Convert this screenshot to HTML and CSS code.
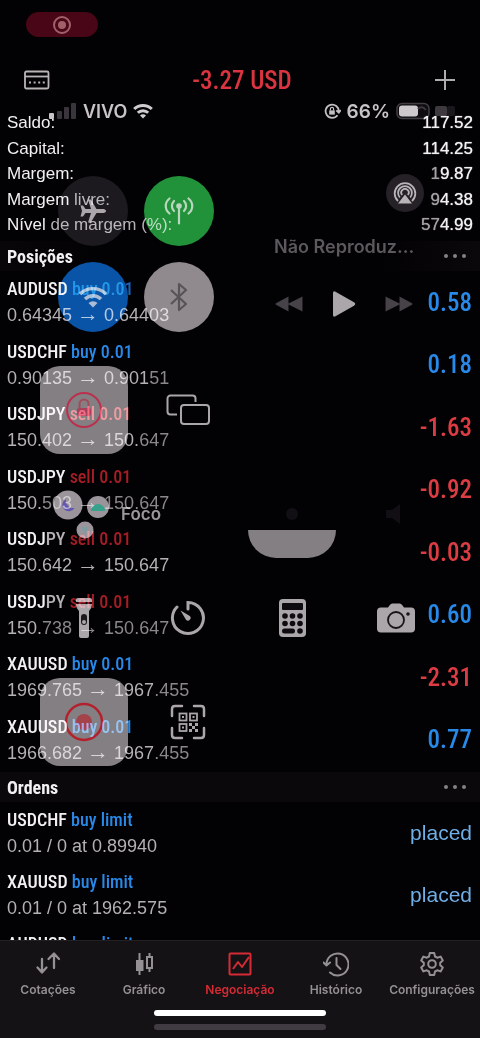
FILE: index.html
```html
<!DOCTYPE html>
<html lang="pt-BR">
<head>
<meta charset="utf-8">
<meta name="viewport" content="width=device-width, initial-scale=1">
<title>Negociação</title>
<link rel="stylesheet" href="styles.css">
</head>
<body>
<div class="app">
  <header class="topbar">
    <div class="recording">
      <svg width="20" height="20" viewBox="0 0 20 20"><circle cx="10" cy="10" r="8" fill="none" stroke="#a0606a" stroke-width="2"/><circle cx="10" cy="10" r="4" fill="#a0606a"/></svg>
    </div>
    <div class="titlebar">
      <button class="icon-button" aria-label="Contas">
        <svg width="26" height="20" viewBox="0 0 26 20" fill="none" stroke="#b9b5b7" stroke-width="1.8"><rect x="1" y="1.5" width="23.500" height="17" rx="1.500"/><path d="M1 6.500h23.500"/><path d="M5 12.500h16" stroke-dasharray="2 2.600" stroke-width="2"/></svg>
      </button>
      <h1 class="profit">-3.27 USD</h1>
      <button class="icon-button" aria-label="Nova ordem">
        <svg width="22" height="22" viewBox="0 0 22 22" stroke="#b0acae" stroke-width="2"><path d="M11 1v20M1 11h20"/></svg>
      </button>
    </div>
  </header>

  <main class="content">
    <dl class="summary">
      <div class="summary-row"><dt>Saldo:</dt><dd>117.52</dd></div>
      <div class="summary-row"><dt>Capital:</dt><dd>114.25</dd></div>
      <div class="summary-row"><dt>Margem:</dt><dd><span class="dim">1</span>9.87</dd></div>
      <div class="summary-row"><dt>Margem <span class="soft">livre:</span></dt><dd><span class="dim">9</span>4.38</dd></div>
      <div class="summary-row"><dt>Nível <span class="soft">de margem (%):</span></dt><dd><span class="dim">57</span>4.99</dd></div>
    </dl>

    <section>
      <div class="section-head section-head-plain"><h2>Posições</h2><button class="more" aria-label="Mais opções de posições"><i></i><i></i><i></i></button></div>
      <ul class="positions">
        <li class="row"><div><h3>AUDUSD <span class="buy deep">buy 0.01</span></h3><p>0.64345 <span class="arrow">→</span> 0.64403</p></div><strong class="value buy">0.58</strong></li>
        <li class="row"><div><h3>USDCHF <span class="buy">buy 0.01</span></h3><p>0.90135 <span class="arrow">→</span> 0.901<span class="fade">51</span></p></div><strong class="value buy">0.18</strong></li>
        <li class="row"><div><h3>USDJPY <span class="sell">sell 0.01</span></h3><p>150.402 <span class="arrow">→</span> 150.<span class="fade">647</span></p></div><strong class="value sell">-1.63</strong></li>
        <li class="row"><div><h3>USDJPY <span class="sell deep">sell 0.01</span></h3><p>150.<span class="fade">503 <span class="arrow">→</span> 150.647</span></p></div><strong class="value sell">-0.92</strong></li>
        <li class="row"><div><h3>USDJ<span class="soft">PY</span> <span class="sell deep">sell 0.01</span></h3><p>150.642 <span class="arrow">→</span> 150.647</p></div><strong class="value sell">-0.03</strong></li>
        <li class="row"><div><h3>USDJ<span class="soft">PY</span> <span class="sell deep">sell 0.01</span></h3><p>150.<span class="fade">738 <span class="arrow">→</span> 150.647</span></p></div><strong class="value buy">0.60</strong></li>
        <li class="row"><div><h3>XAUUSD <span class="buy">buy 0.01</span></h3><p>1969.765 <span class="arrow">→</span> 1967<span class="fade">.455</span></p></div><strong class="value sell">-2.31</strong></li>
        <li class="row"><div><h3>XAUUSD <span class="buy">buy 0.01</span></h3><p>1966.682 <span class="arrow">→</span> 1967<span class="fade">.455</span></p></div><strong class="value buy">0.77</strong></li>
      </ul>
    </section>

    <section>
      <div class="section-head"><h2>Ordens</h2><button class="more" aria-label="Mais opções de ordens"><i></i><i></i><i></i></button></div>
      <ul class="orders">
        <li class="row"><div><h3>USDCHF <span class="buy">buy limit</span></h3><p>0.01 / 0 at 0.89940</p></div><span class="placed">placed</span></li>
        <li class="row"><div><h3>XAUUSD <span class="buy">buy limit</span></h3><p>0.01 / 0 at 1962.575</p></div><span class="placed">placed</span></li>
        <li class="row"><div><h3>AUDUSD <span class="buy">buy limit</span></h3></div></li>
      </ul>
    </section>
  </main>

  <footer class="bottom">
    <nav class="tabs">
      <a class="tab" href="#cotacoes"><svg width="26" height="26" viewBox="0 0 26 26" fill="none" stroke="currentColor" stroke-width="2.300" stroke-linecap="round" stroke-linejoin="round"><path d="M7 8v13M2.500 16.500L7 21.500l4.500-5M19 17V3M13.500 8L19 2.500 24 8"/></svg><span>Cotações</span></a>
      <a class="tab" href="#grafico"><svg width="26" height="26" viewBox="0 0 26 26" fill="none" stroke="currentColor" stroke-width="2"><path d="M8.500 2v22M18.500 2v4M18.500 17v4"/><rect x="6" y="10" width="5.500" height="9" fill="currentColor"/><rect x="16" y="6" width="5" height="11"/></svg><span>Gráfico</span></a>
      <a class="tab tab-active" href="#negociacao" aria-current="page"><svg width="26" height="26" viewBox="0 0 26 26" fill="none" stroke="currentColor" stroke-width="2" stroke-linejoin="round"><rect x="2.500" y="2.500" width="21" height="21" rx="1"/><path d="M6 18l5-7 4 5 7-10"/></svg><span>Negociação</span></a>
      <a class="tab" href="#historico"><svg width="26" height="26" viewBox="0 0 26 26" fill="none" stroke="currentColor" stroke-width="2" stroke-linecap="round" stroke-linejoin="round"><path d="M3.500 13.500A11 11 0 1 1 7 21.500M.5 11.500l3 3 3.500-3"/><path d="M13.500 7v7l4 4"/></svg><span>Histórico</span></a>
      <a class="tab" href="#configuracoes"><svg width="26" height="26" viewBox="0 0 26 26" fill="none" stroke="currentColor" stroke-width="2" stroke-linejoin="round"><path d="M10.800 2h4.400l.8 3.500 2.200 1.200 3.400-1.100 2.200 3.800-2.600 2.400v2.400l2.600 2.400-2.200 3.800-3.400-1.100-2.200 1.200-.8 3.500h-4.400l-.8-3.500-2.200-1.200-3.400 1.100-2.200-3.800 2.600-2.400v-2.400L2.200 9.400l2.200-3.800 3.400 1.100L10 5.500z"/><circle cx="13" cy="13" r="3.800"/></svg><span>Configurações</span></a>
    </nav>
    <div class="home-bar"></div>
    <div class="home-bar home-bar-dim"></div>
  </footer>

  <div class="control-center">
    <div class="status">
      <div class="status-side">
        <svg width="28" height="18" viewBox="0 0 28 18" fill="#38343a"><rect x="0" y="11" width="5" height="6" rx="1" fill="#c7c3c6"/><rect x="8" y="9" width="5" height="8" rx="1"/><rect x="15" y="5" width="5" height="12" rx="1"/><rect x="22" y="1" width="5" height="16" rx="1"/></svg>
        <span class="carrier">VIVO</span>
        <svg width="20" height="16" viewBox="0 0 20 16" fill="none" stroke="#cfcccf" stroke-width="3"><path d="M1.200 6a12.500 12.500 0 0 1 17.600 0M4.800 9.800a7.400 7.400 0 0 1 10.400 0"/><path d="M7 12.400a4.200 4.200 0 0 1 6 0L10 15.600z" fill="#cfcccf" stroke="none"/></svg>
      </div>
      <div class="status-side status-right">
        <svg width="17" height="17" viewBox="0 0 17 17" fill="none" stroke="#c4c0c3" stroke-width="1.800"><path d="M13.500 12.200A6.600 6.600 0 1 1 14.800 8.500M12.300 7.300l2.500 2.400 2-2.700"/><rect x="5.200" y="7.400" width="5.600" height="4.200" fill="#c4c0c3" stroke="none"/><path d="M6.400 7.500V6a1.600 1.600 0 0 1 3.200 0v1.500" stroke-width="1.200"/></svg>
        <span class="charge">66%</span>
        <svg width="64" height="18" viewBox="0 0 64 18"><rect x="1" y="1.500" width="32" height="15" rx="5" fill="#0d0b0e" stroke="#403c41" stroke-width="1.500"/><rect x="3" y="3.500" width="19" height="11" rx="3" fill="#cdc9cc"/><path d="M22 7q4-4 8 1" stroke="#39353a" stroke-width="2" fill="none"/><rect x="39" y="4" width="12" height="10" rx="2" fill="#3c383d"/><rect x="51" y="4" width="8" height="10" rx="2" fill="#19171a"/></svg>
      </div>
    </div>

    <div class="modules">
      <div class="connectivity">
        <button class="toggle toggle-off" aria-label="Modo avião"><svg width="28" height="28" viewBox="0 0 28 28" fill="#aaa6a9"><path d="M27 14c0 1.400-1.800 2-3.500 2h-6l-5.700 9.500H9L12 16H6.500L4 19.500H1.500L3 14 1.500 8.500H4L6.500 12H12L9 2.500h2.800L17.500 12h6c1.700 0 3.500.6 3.500 2z"/></svg></button>
        <button class="toggle toggle-green" aria-label="Dados celulares"><svg width="32" height="30" viewBox="0 0 32 30" fill="none" stroke="#b9d6bd" stroke-width="2.200" stroke-linecap="round"><circle cx="16" cy="10" r="2.800" fill="#b9d6bd" stroke="none"/><path d="M16 11v16.500M11 15a7 7 0 0 1 0-10M21 15a7 7 0 0 0 0-10M6.500 17.500c-5-4-5-11 0-15M25.500 17.500c5-4 5-11 0-15"/></svg></button>
        <button class="toggle toggle-blue" aria-label="Wi-Fi"><svg width="30" height="24" viewBox="0 0 30 24" fill="none" stroke="#a9bdd4" stroke-width="3.400"><path d="M2 9a18.400 18.400 0 0 1 26 0M7 14a11.300 11.300 0 0 1 16 0"/><path d="M10.500 18a6.400 6.400 0 0 1 9 0L15 22.500z" fill="#a9bdd4" stroke="none"/></svg></button>
        <button class="toggle toggle-grey" aria-label="Bluetooth"><svg width="20" height="30" viewBox="0 0 20 30" fill="none" stroke="#565254" stroke-width="2.200" stroke-linejoin="round"><path d="M2 8l15 14-7 6V2l7 6L2 22"/></svg></button>
      </div>

      <div class="media">
        <button class="airplay" aria-label="AirPlay"><svg width="26" height="26" viewBox="0 0 26 26" fill="none" stroke="#b8b4b7" stroke-width="1.800"><path d="M6 21A10.300 10.300 0 1 1 20 21M7.800 17.500a6.900 6.900 0 1 1 10.400 0M10.200 15a3.700 3.700 0 1 1 5.600 0"/><path d="M13 14.500l7 9H6z" fill="#b8b4b7" stroke="none"/></svg></button>
        <p class="media-title">Não Reproduz...</p>
        <div class="media-controls">
          <button aria-label="Anterior"><svg width="30" height="20" viewBox="0 0 30 20" fill="#454145"><path d="M14.500 2.500v15L2 10.800a1 1 0 0 1 0-1.600zM28.500 2.500v15L15 10.800a1 1 0 0 1 0-1.600z"/></svg></button>
          <button aria-label="Reproduzir"><svg width="26" height="28" viewBox="0 0 26 28" fill="#aaa6a9"><path d="M2 3Q2 .5 4.500 1.700L23 12.300q2.500 1.700 0 3.400L4.500 26.300Q2 27.500 2 25z"/></svg></button>
          <button aria-label="Próxima"><svg width="30" height="20" viewBox="0 0 30 20" fill="#454145"><path d="M1.500 2.500v15L15 10.800a1 1 0 0 0 0-1.600zM15.500 2.500v15L28 10.800a1 1 0 0 0 0-1.600z"/></svg></button>
        </div>
      </div>

      <button class="tile" aria-label="Bloqueio de rotação"><svg width="40" height="40" viewBox="0 0 40 40" fill="none" stroke="#b9304c" stroke-width="2"><circle cx="20" cy="20" r="17"/><path d="M15.500 18v-4a4.500 4.500 0 0 1 9 0v4" stroke="#a34a59"/><rect x="13" y="18" width="14" height="8" rx="2" fill="#a8405a" stroke="none"/></svg></button>
      <button class="plain" aria-label="Espelhar tela"><svg width="46" height="32" viewBox="0 0 46 32" fill="none" stroke="#aaa6a9" stroke-width="2"><path d="M12 20.500H5.500a3 3 0 0 1-3-3v-13a3 3 0 0 1 3-3h22a3 3 0 0 1 3 3V8"/><rect x="16" y="11" width="28" height="19" rx="3"/></svg></button>

      <button class="focus"><svg width="58" height="50" viewBox="0 0 58 50"><g fill="#9a959a"><circle cx="15" cy="16" r="14.500"/><circle cx="45" cy="18" r="11"/><circle cx="32" cy="41" r="8.500"/></g><path d="M13 10a6.500 6.500 0 1 0 8.500 9A7.500 7.500 0 0 1 13 10z" fill="#6255ad"/><path d="M38 22a7 7 0 0 1 14 0z" fill="#35a18b"/><path d="M29 38h6v2l-3 5-3-5z" fill="#7d9da2"/></svg><span>Foco</span></button>
      <div class="brightness"><svg width="16" height="16" viewBox="0 0 16 16" fill="#100e11"><circle cx="8" cy="8" r="6"/></svg><div class="level"></div></div>
      <div class="plain"><svg width="24" height="24" viewBox="0 0 24 24" fill="#100e11"><path d="M2 8h6l8-6v20l-8-6H2z"/></svg></div>

      <button class="plain" aria-label="Lanterna"><svg width="20" height="42" viewBox="0 0 20 42" fill="#aaa6a9"><path d="M2 3q0-2 2-2h12q2 0 2 2v2H2zM2 7h16q0 4-3 7v25q0 2-2 2H7q-2 0-2-2V14q-3-3-3-7z"/><rect x="7" y="17" width="6" height="11" rx="3" fill="#1a181a"/><circle cx="10" cy="25" r="2" fill="#aaa6a9"/></svg></button>
      <button class="plain" aria-label="Timer"><svg width="36" height="36" viewBox="0 0 36 36" fill="none" stroke="#aaa6a9" stroke-width="3" stroke-linecap="round"><path d="M18 9V2.500A15.500 15.500 0 1 1 7 7"/><path d="M10.500 10.500l9.300 5.500a2.500 2.500 0 0 1-3.800 3.800z" fill="#aaa6a9" stroke="none"/></svg></button>
      <button class="plain" aria-label="Calculadora"><svg width="28" height="38" viewBox="0 0 28 38" fill="#0c0a0d"><rect x="1" y="0" width="27" height="38" rx="4" fill="#aaa6a9"/><rect x="4" y="4" width="21" height="7" rx="1"/><circle cx="7" cy="17" r="2.800"/><circle cx="14.500" cy="17" r="2.800"/><circle cx="22" cy="17" r="2.800"/><circle cx="7" cy="24.500" r="2.800"/><circle cx="14.500" cy="24.500" r="2.800"/><circle cx="22" cy="24.500" r="2.800"/><rect x="4" y="29.500" width="13" height="5" rx="2.500"/><circle cx="22" cy="32" r="2.800"/></svg></button>
      <button class="plain" aria-label="Câmera"><svg width="38" height="30" viewBox="0 0 38 30"><path d="M4 4.500h7q2.500-4 4.500-4h7q2 0 4.500 4h7q4 0 4 4v17q0 4-4 4H4q-4 0-4-4v-17q0-4 4-4z" fill="#aaa6a9"/><circle cx="19" cy="17" r="8" fill="none" stroke="#151316" stroke-width="1.800"/><circle cx="31" cy="11" r="1.800" fill="#151316"/></svg></button>

      <button class="tile" aria-label="Gravação de tela"><svg width="40" height="40" viewBox="0 0 40 40"><circle cx="20" cy="20" r="18" fill="none" stroke="#b3202c" stroke-width="2.500"/><circle cx="20" cy="20" r="8" fill="#a34248"/></svg></button>
      <button class="plain" aria-label="Ler código"><svg width="36" height="36" viewBox="0 0 36 36" fill="none" stroke="#aaa6a9" stroke-width="2.500"><path d="M2 12V5q0-3 3-3h7M24 2h7q3 0 3 3v7M34 24v7q0 3-3 3h-7M12 34H5q-3 0-3-3v-7" stroke-linecap="round"/><g stroke-width="1.800"><rect x="9.500" y="9.500" width="7" height="7"/><rect x="20" y="9.500" width="7" height="7"/><rect x="9.500" y="20" width="7" height="7"/></g><g fill="#aaa6a9" stroke="none"><rect x="12" y="12" width="2" height="2"/><rect x="22.500" y="12" width="2" height="2"/><rect x="12" y="22.500" width="2" height="2"/><rect x="19" y="19" width="3" height="3"/><rect x="25" y="19" width="3" height="3"/><rect x="22" y="22" width="3" height="3"/><rect x="19" y="25" width="3" height="3"/><rect x="25" y="25" width="3" height="3"/></g></svg></button>
    </div>
  </div>
</div>
</body>
</html>
```
FILE: styles.css
```css
* { box-sizing: border-box; margin: 0; padding: 0; }

body {
  background: #000;
  color: #f2f0f2;
  font-family: "Liberation Sans", Arial, sans-serif;
}

button {
  display: grid;
  place-items: center;
  border: 0;
  background: none;
  color: inherit;
  font: inherit;
}

svg { display: block; }
ul { list-style: none; }

.app {
  position: relative;
  display: flex;
  flex-direction: column;
  height: 100vh;
  overflow: hidden;
  background: #020103;
}

/* Top bar */
.topbar { padding: 12px 24px 0; }

.recording {
  display: grid;
  place-items: center;
  width: 72px;
  height: 25px;
  margin-left: 2px;
  border-radius: 13px;
  background: #480616;
}

.titlebar {
  display: flex;
  align-items: center;
  justify-content: space-between;
  height: 44px;
  margin-top: 21px;
}

.profit {
  color: #d93440;
  font-family: "Roboto Condensed", "Liberation Sans Narrow", "Open Sans Condensed", sans-serif;
  font-size: 25px;
  font-weight: 500;
}

/* Account summary */
.content {
  flex: 1;
  min-height: 0;
  overflow: hidden;
  padding-top: 9px;
}

.summary {
  display: flex;
  flex-direction: column;
  justify-content: space-between;
  height: 126px;
  padding: 0 7px;
}

.summary-row {
  display: flex;
  justify-content: space-between;
  font-size: 17px;
  line-height: 24px;
}

.summary dd { text-shadow: 0 0 1px currentColor; }
.dim { color: #a5a1a4; }
.soft { color: #b4b0b3; }
.fade { color: #8b878a; }

/* Lists */
.section-head {
  display: flex;
  align-items: center;
  justify-content: space-between;
  height: 30px;
  margin-top: 1px;
  padding: 0 14px 0 7px;
  background: #0b080c;
}

.section-head-plain { margin-top: 4px; background: linear-gradient(90deg, #080609, #020103 20%, #020103 80%, #0b080c); }

.section-head h2 {
  font-family: "Roboto Condensed", "Liberation Sans Narrow", sans-serif;
  font-size: 18px;
  font-weight: 700;
}

.row h3 {
  font-family: "Roboto Condensed", "Liberation Sans Narrow", sans-serif;
  font-size: 18px;
  font-weight: 500;
  line-height: 26px;
}

.more { display: flex; gap: 5px; }
.more i { width: 4px; height: 4px; border-radius: 50%; background: #858185; }

.positions {
  display: flex;
  flex-direction: column;
  height: 500px;
}

.row {
  display: flex;
  flex: 1;
  align-items: center;
  justify-content: space-between;
  padding: 0 8px 0 7px;
}

.orders .row { padding-top: 5px; padding-bottom: 5px; }

.row p { color: #b4b0b3; font-size: 18px; line-height: 26px; }
.arrow { font-size: 22px; line-height: 18px; }
.row .buy { color: #2889e8; }
.row .sell { color: #dc3c43; }
.row .buy.deep { color: #1b64be; }
.row .sell.deep { color: #a51d26; }

.row .value {
  font-family: "Roboto Condensed", "Liberation Sans Narrow", "Open Sans Condensed", sans-serif;
  font-size: 25px;
  font-weight: 500;
}

.placed { color: #70aee6; font-size: 21px; }

/* Tab bar */
.bottom {
  height: 98px;
  border-top: 1px solid #232024;
  background: #151216;
}

.tabs {
  display: grid;
  grid-template-columns: repeat(5, 1fr);
  padding-top: 10px;
}

.tab {
  display: flex;
  flex-direction: column;
  align-items: center;
  gap: 5px;
  color: #949094;
  font-family: Inter, sans-serif;
  font-size: 12px;
  font-weight: 600;
  line-height: 16px;
  text-decoration: none;
}

.tab-active { color: #d52b34; }

.home-bar {
  width: 36%;
  height: 6px;
  margin: 12px auto 0;
  border-radius: 3px;
  background: #fff;
}

.home-bar-dim { margin-top: 8px; background: #403c41; }

/* Translucent control center, blended over the trading screen */
.control-center {
  position: absolute;
  inset: 0;
  padding-top: 100px;
  mix-blend-mode: screen;
}

.status {
  display: flex;
  align-items: center;
  justify-content: space-between;
  height: 22px;
  padding: 0 20px 0 49px;
  color: #c7c3c6;
  font-family: Inter, sans-serif;
  font-size: 19px;
  font-weight: 600;
}

.status-side { display: flex; align-items: center; gap: 6px; }
.carrier { font-size: 18px; }

.modules {
  display: grid;
  grid-template-columns: repeat(4, 1fr);
  grid-auto-rows: 104px;
  margin-top: 28px;
  padding: 0 32px;
}

.connectivity {
  display: grid;
  grid-area: span 2 / span 2;
  grid-template-columns: 70px 70px;
  place-content: center;
  gap: 16px;
}

.toggle { width: 70px; height: 70px; border-radius: 50%; }
.toggle-off { background: #1b191c; }
.toggle-green { background: #1f9237; }
.toggle-blue { background: #0853a6; }
.toggle-grey { background: #8f8a8d; }

.media {
  display: flex;
  flex-direction: column;
  grid-area: span 2 / span 2;
  padding: 24px 24px 0 34px;
}

.airplay {
  align-self: flex-end;
  width: 38px;
  height: 38px;
  border-radius: 50%;
  background: #232024;
}

.media-title {
  margin-top: 24px;
  color: #5b575b;
  font-family: Inter, sans-serif;
  font-size: 18px;
  font-weight: 600;
  line-height: 22px;
  white-space: nowrap;
}

.media-controls {
  display: flex;
  align-items: center;
  justify-content: space-between;
  margin: 32px 10px 0 0;
}

.tile {
  place-self: center;
  width: 88px;
  height: 88px;
  border-radius: 20px;
  background: #837e81;
}

.plain { place-self: center; }

.focus {
  display: flex;
  grid-column: 1 / span 2;
  gap: 10px;
  padding-left: 21px;
  color: #9b979a;
  font-family: Inter, sans-serif;
  font-size: 17px;
  font-weight: 600;
}

.brightness {
  display: flex;
  flex-direction: column;
  align-items: center;
  justify-content: flex-end;
  gap: 8px;
  padding-bottom: 8px;
}

.level {
  width: 88px;
  height: 28px;
  border-radius: 0 0 28px 28px;
  background: #837e81;
}
```
